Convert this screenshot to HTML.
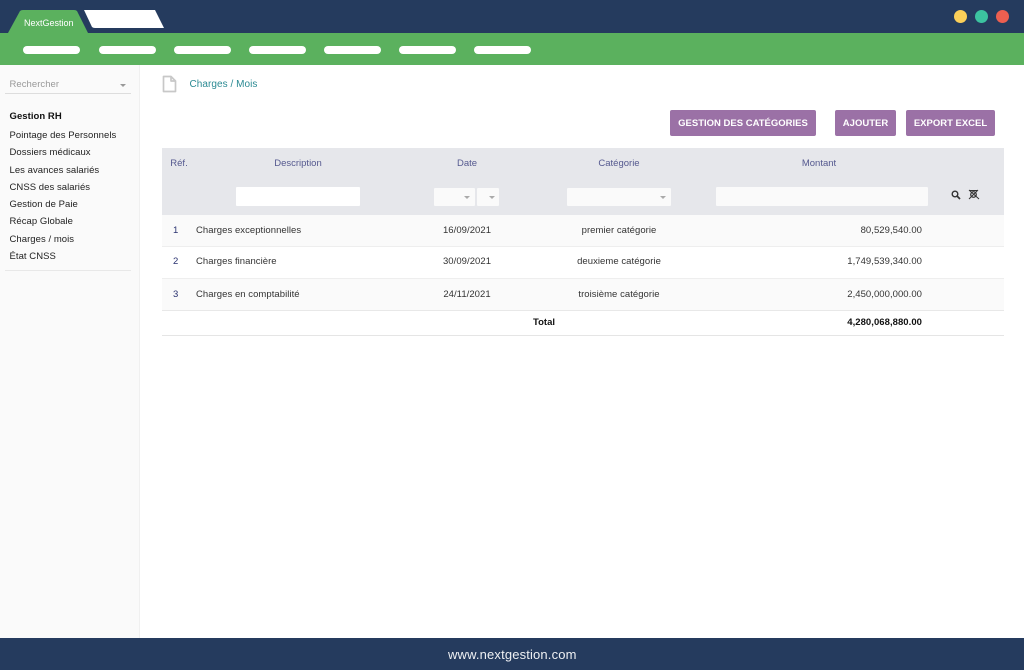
<!DOCTYPE html>
<html><head><meta charset="utf-8"><style>
html,body{margin:0;padding:0;width:1024px;height:670px;overflow:hidden;background:#fff;font-family:"Liberation Sans",sans-serif}
.a{position:absolute;white-space:nowrap}
.pill{position:absolute;top:46px;width:57px;height:8px;border-radius:4px;background:#fff}
.m{position:absolute;left:9.5px;font-size:9.5px;color:#222;line-height:12px;white-space:nowrap;letter-spacing:.05px}
.btn{position:absolute;top:110px;height:26px;background:#9b71a6;border-radius:2px;color:#fff;font-size:9.5px;font-weight:bold;line-height:27px;text-align:center;letter-spacing:0}
.h{position:absolute;top:158px;font-size:9.5px;color:#55598f;line-height:12px;transform:translateX(-50%);white-space:nowrap}
.c{position:absolute;font-size:9.5px;color:#333;line-height:12px;white-space:nowrap;letter-spacing:.05px}
.ctr{transform:translateX(-50%)}
.r{transform:translateX(-100%)}
.box{position:absolute;background:#fafafa;border-radius:1px}
.tri{position:absolute;width:0;height:0;border-left:3px solid transparent;border-right:3px solid transparent;border-top:3px solid #aaa}
</style></head><body>
<div class="a" style="left:0;top:0;width:1024px;height:33px;background:#253b5e"></div>
<div class="a" style="left:0;top:33px;width:1024px;height:32px;background:#5bb15e"></div>
<svg class="a" style="left:0;top:0" width="180" height="34"><path d="M8 33 L20 11 Q21 10 23 10 L74 10 Q76 10 77 11 L88 33Z" fill="#5bb15e"/><path d="M84 10 L155 10 L164 28 L95 28 Q93 28 92 27Z" fill="#fff"/></svg>
<div class="a" style="left:24px;top:17px;font-size:9px;color:#fff;line-height:12px">NextGestion</div>
<div class="a" style="left:954px;top:10px;width:13px;height:13px;border-radius:50%;background:#fbcf59"></div>
<div class="a" style="left:975px;top:10px;width:13px;height:13px;border-radius:50%;background:#3cc3a0"></div>
<div class="a" style="left:996px;top:10px;width:13px;height:13px;border-radius:50%;background:#ec5f50"></div>
<div class="pill" style="left:23px"></div><div class="pill" style="left:99px"></div><div class="pill" style="left:174px"></div><div class="pill" style="left:249px"></div><div class="pill" style="left:324px"></div><div class="pill" style="left:399px"></div><div class="pill" style="left:474px"></div>

<div class="a" style="left:0;top:65px;width:139px;height:573px;background:#fafafa;border-right:1px solid #f0f0f0"></div>
<div class="a" style="left:9.5px;top:78px;font-size:9.5px;color:#999;line-height:13px;letter-spacing:.05px">Rechercher</div>
<div class="tri" style="left:120px;top:84px;border-top-color:#999"></div>
<div class="a" style="left:5px;top:93px;width:126px;height:1px;background:#ddd"></div>
<div class="m" style="top:111px;font-weight:bold;color:#111">Gestion RH</div>
<div class="m" style="top:130px">Pointage des Personnels</div>
<div class="m" style="top:147px">Dossiers médicaux</div>
<div class="m" style="top:165px">Les avances salariés</div>
<div class="m" style="top:182px">CNSS des salariés</div>
<div class="m" style="top:199px">Gestion de Paie</div>
<div class="m" style="top:216px">Récap Globale</div>
<div class="m" style="top:234px">Charges / mois</div>
<div class="m" style="top:251px">État CNSS</div>
<div class="a" style="left:5px;top:270px;width:126px;height:1px;background:#e8e8e8"></div>

<svg class="a" style="left:162px;top:75px" width="15" height="18"><path d="M1.5 1.5 H9 L13.5 6 V16.5 H1.5Z M9 1.5 V6 H13.5" fill="#fff" stroke="#c8c8c8" stroke-width="1.7" stroke-linejoin="round"/></svg>
<div class="a" style="left:189.5px;top:78px;font-size:10px;color:#2b8a93;line-height:13px;letter-spacing:.05px">Charges / Mois</div>

<div class="btn" style="left:670px;width:146px">GESTION DES CATÉGORIES</div>
<div class="btn" style="left:835px;width:61px">AJOUTER</div>
<div class="btn" style="left:906px;width:89px">EXPORT EXCEL</div>

<div class="a" style="left:162px;top:148px;width:842px;height:67px;background:#e6e7eb"></div>
<div class="h" style="left:179px">Réf.</div>
<div class="h" style="left:298px">Description</div>
<div class="h" style="left:467px">Date</div>
<div class="h" style="left:619px">Catégorie</div>
<div class="h" style="left:819px">Montant</div>
<div class="box" style="left:236px;top:187px;width:124px;height:19px;background:#fff"></div>
<div class="box" style="left:434px;top:188px;width:41px;height:18px"></div><div class="tri" style="left:464px;top:196px"></div>
<div class="box" style="left:477px;top:188px;width:22px;height:18px"></div><div class="tri" style="left:489px;top:196px"></div>
<div class="box" style="left:567px;top:188px;width:104px;height:18px"></div><div class="tri" style="left:660px;top:196px"></div>
<div class="box" style="left:716px;top:187px;width:212px;height:19px"></div>
<svg class="a" style="left:950px;top:189px" width="32" height="12" fill="none" stroke="#333"><circle cx="5" cy="5" r="2.8" stroke-width="1.4"/><path d="M7 7 L10 10" stroke-width="1.7"/><circle cx="23.5" cy="5.5" r="2.8" stroke-width="1.2"/><path d="M19 1 L29 10 M28 1 L19 10 M19.5 1.5 H27" stroke-width="1"/></svg>

<div class="a" style="left:162px;top:215px;width:842px;height:31px;background:#fafafa"></div>
<div class="a" style="left:162px;top:279px;width:842px;height:31px;background:#fafafa;border-bottom:1px solid #e8e8e8"></div>
<div class="a" style="left:162px;top:246px;width:842px;height:1px;background:#eee"></div>
<div class="a" style="left:162px;top:278px;width:842px;height:1px;background:#eee"></div>
<div class="a" style="left:162px;top:335px;width:842px;height:1px;background:#e5e5e5"></div>

<div class="c" style="left:173px;top:225px;color:#2a3270">1</div>
<div class="c" style="left:196px;top:225px">Charges exceptionnelles</div>
<div class="c ctr" style="left:467px;top:225px">16/09/2021</div>
<div class="c ctr" style="left:619px;top:225px">premier catégorie</div>
<div class="c r" style="left:922px;top:225px">80,529,540.00</div>

<div class="c" style="left:173px;top:256px;color:#2a3270">2</div>
<div class="c" style="left:196px;top:256px">Charges financière</div>
<div class="c ctr" style="left:467px;top:256px">30/09/2021</div>
<div class="c ctr" style="left:619px;top:256px">deuxieme catégorie</div>
<div class="c r" style="left:922px;top:256px">1,749,539,340.00</div>

<div class="c" style="left:173px;top:289px;color:#2a3270">3</div>
<div class="c" style="left:196px;top:289px">Charges en comptabilité</div>
<div class="c ctr" style="left:467px;top:289px">24/11/2021</div>
<div class="c ctr" style="left:619px;top:289px">troisième catégorie</div>
<div class="c r" style="left:922px;top:289px">2,450,000,000.00</div>

<div class="c" style="left:533px;top:317px;font-weight:bold;color:#111;letter-spacing:0">Total</div>
<div class="c r" style="left:922px;top:317px;font-weight:bold;color:#111;letter-spacing:.05px">4,280,068,880.00</div>

<div class="a" style="left:0;top:638px;width:1024px;height:32px;background:#253b5e"></div>
<div class="a" style="left:448px;top:647px;font-size:13px;color:#eef0f3;line-height:16px;letter-spacing:.15px">www.nextgestion.com</div>
</body></html>
